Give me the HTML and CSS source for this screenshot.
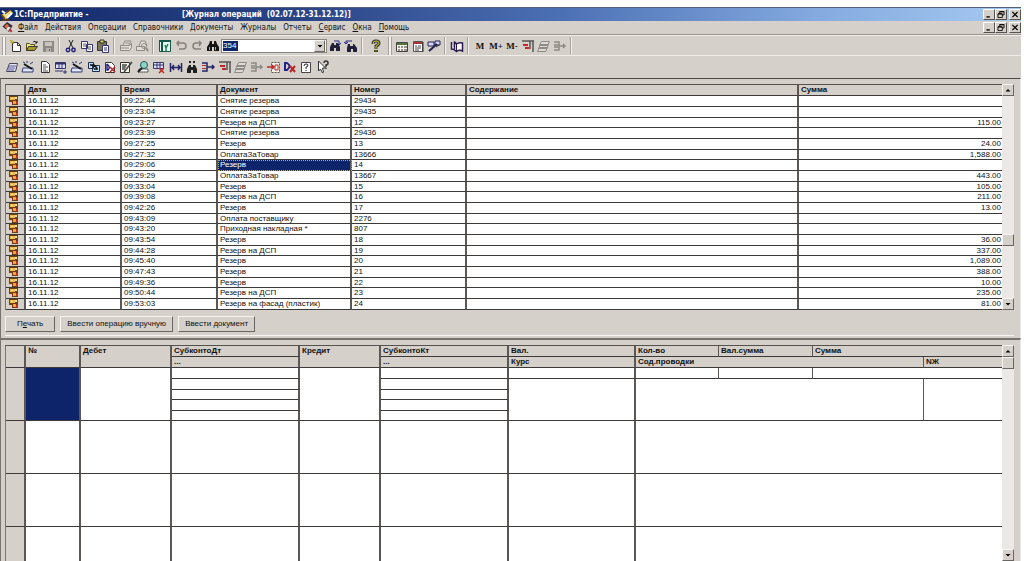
FILE: index.html
```html
<!DOCTYPE html>
<html lang="ru">
<head>
<meta charset="utf-8">
<title>1С:Предприятие - Журнал операций</title>
<link rel="stylesheet" href="styles.css">
</head>
<body>
<svg class="defs" aria-hidden="true">
  <symbol id="op" viewBox="0 0 10 9"><path d="M0 0h9v6H0z" fill="#6f4216"/><path d="M1 1h5v3H1z" fill="#efb848"/><path d="M2 2h2v1H2zM6 1h2v2H6z" fill="#fbe4a0"/><path d="M3 4h6v5H3z" fill="#7c3514"/><path d="M4 5h3v3H4z" fill="#eaa53c"/><path d="M7 6h2v2H7z" fill="#c8302a"/></symbol>
  <symbol id="new" viewBox="0 0 14 14"><path d="M3.5 3.5h5l3 3v6h-8z" fill="#fff" stroke="#333"/><path d="M8.500 3.500v3h3" fill="none" stroke="#333"/><path d="M1 3h4M3 1v4M1 1l4 4" stroke="#b5ad2a"/></symbol>
  <symbol id="open" viewBox="0 0 14 14"><path d="M1.500 11.500v-7h3l1 1h4v2" fill="#f5e98a" stroke="#55501a"/><path d="M1.500 11.500l2-4h9l-3 4z" fill="#a79a28" stroke="#333"/><path d="M8 3q2-2 4 1m0-2v2h-2" fill="none" stroke="#222"/></symbol>
  <symbol id="save" viewBox="0 0 14 14"><path d="M2 2h11v11H2z" fill="#8d8a85"/><path d="M4 3h7v4H4z" fill="#c9c6c0"/><path d="M5 9h5v4H5z" fill="#b5b2ac"/><path d="M8 10h1v2H8z" fill="#666"/></symbol>
  <symbol id="cut" viewBox="0 0 14 14"><path d="M5 1l4 8M9 1L5 9" stroke="#222"/><g fill="none" stroke="#26267c" stroke-width="1.500"><circle cx="4" cy="11" r="1.700"/><circle cx="9.500" cy="11" r="1.700"/></g></symbol>
  <symbol id="copy" viewBox="0 0 14 14"><path d="M1.500 2.500h6v7h-6zM6.500 5.500h6v7h-6z" fill="#fff" stroke="#34346c"/><path d="M3 5h3M3 7h3M8 8h3M8 10h3" stroke="#555"/></symbol>
  <symbol id="paste" viewBox="0 0 14 14"><path d="M1.500 2.500h9v9h-9z" fill="#77755c" stroke="#333"/><path d="M4 1h4v3H4z" fill="#d8d060" stroke="#333"/><path d="M6.500 6.500h6v7h-6z" fill="#fff" stroke="#34346c"/><path d="M8 9h3M8 11h3" stroke="#34346c"/></symbol>
  <symbol id="print" viewBox="0 0 14 14"><path d="M4 6l2-4h6l-2 4M1.500 6.500h9l2-2v4l-2 3h-9z" fill="#e4e1dc" stroke="#8d8a85"/><path d="M2 9h8M6 4h4" stroke="#8d8a85"/></symbol>
  <symbol id="preview" viewBox="0 0 14 14"><path d="M4 7l2-5h4l2 5M1.500 7.500h8v4h-8z" fill="#e4e1dc" stroke="#8d8a85"/><circle cx="9" cy="7" r="2.500" fill="none" stroke="#8d8a85"/><path d="M11 9l2 3" stroke="#8d8a85" stroke-width="2"/></symbol>
  <symbol id="props" viewBox="0 0 14 14"><path d="M1.500 1.500h11v11h-11z" fill="#e8fff4" stroke="#145a48"/><path d="M1 2h12M4 2v11" stroke="#145a48" stroke-width="2"/><path d="M7 6l1 3 2-4M8 9v3" fill="none" stroke="#228055" stroke-width="1.500"/></symbol>
  <symbol id="undo" viewBox="0 0 14 14"><path d="M3 4h6q3 0 3 3t-3 3H5M5 2L3 4l2 3" fill="none" stroke="#858280" stroke-width="1.500"/></symbol>
  <symbol id="redo" viewBox="0 0 14 14"><path d="M11 4H6Q3 4 3 7t3 3h5M9 2l2 2-2 3" fill="none" stroke="#858280" stroke-width="1.500"/></symbol>
  <symbol id="bino" viewBox="0 0 14 14"><path d="M4 2h2v3h2V2h2l1 3 2 3v4H8V8H6v4H1V8l2-3z" fill="#151515"/><path d="M3 8h1v3H3zM9 8h1v3H9z" fill="#aaa"/></symbol>
  <symbol id="findn" viewBox="0 0 14 14"><path d="M4 4h2v2h2V4h2l2 4v4H8V9H6v3H2V8z" fill="#202038"/><path d="M6 2h5m0 0v4M9 4l2 2 2-2" fill="none" stroke="#26267c"/></symbol>
  <symbol id="findp" viewBox="0 0 14 14"><path d="M4 5h2v2h3V5h1l3 4v4H9v-3H7v3H3V9z" fill="#202038"/><path d="M2 5V2h6M0 3l2 2 2-2" fill="none" stroke="#26267c"/></symbol>
  <symbol id="findno" viewBox="0 0 14 14"><path d="M4 5h2v2h2V5h2l2 4v4H8v-3H6v3H2V9z" fill="#202020"/><path d="M4 2h2M8 2h2" stroke="#202020" stroke-width="2"/></symbol>
  <symbol id="help" viewBox="0 0 14 14"><path d="M4 5q0-3 3-3t3 2q0 2-3 3v3" fill="none" stroke="#333" stroke-width="3"/><path d="M4 5q0-3 3-3t3 2q0 2-3 3v3" fill="none" stroke="#d2cf38"/><path d="M5 11h4v2H5z" fill="#55531c"/></symbol>
  <symbol id="calc" viewBox="0 0 14 14"><path d="M1.500 3.500h11v9h-11z" fill="#f6f4ea" stroke="#444"/><path d="M2 5h10" stroke="#55753c" stroke-width="2"/><path d="M3 8h2M6 8h2M9 8h3M3 11h2M6 11h2M9 11h3" stroke="#333"/></symbol>
  <symbol id="cal" viewBox="0 0 14 14"><path d="M2.500 2.500h9v10h-9z" fill="#fff" stroke="#555"/><path d="M3 4h8" stroke="#a33" stroke-width="2"/><path d="M4 7h2M7 7h3M4 9h6M4 11h4" stroke="#444"/><path d="M12 3v10" stroke="#333"/></symbol>
  <symbol id="tool" viewBox="0 0 14 14"><path d="M1 3h6v4H1zM8 2h5v4H8z" fill="#d8d8ff" stroke="#222250"/><path d="M2 12l8-7" stroke="#222250" stroke-width="2"/><path d="M9 8l3-2" stroke="#222"/></symbol>
  <symbol id="book" viewBox="0 0 14 14"><path d="M1.500 3v7q3 0 5 2.500 3-2 6-.5V4q-4-1-6 1Q5 3 4.500 3v7" fill="#fff" stroke="#28184c" stroke-width="1.500"/><path d="M6.500 5v7" stroke="#28184c"/></symbol>
  <symbol id="tree" viewBox="0 0 14 14"><path d="M1 2h12M12 2v11M9 2v8" stroke="#555" stroke-width="1.500"/><path d="M2 5h5v2H2zM4 8h4v2H4z" fill="#c22727"/></symbol>
  <symbol id="stack" viewBox="0 0 14 14"><path d="M4.500 2.500h8l-2 4h-8zM3.500 5.500h8l-2 4h-8zM2.500 8.500h8l-2 4h-8z" fill="#dedbd5" stroke="#8d8a85"/></symbol>
  <symbol id="merge" viewBox="0 0 14 14"><path d="M1 3h5v3H1m0 2h5v3H1M6 7h6M10 5l2 2-2 2" fill="none" stroke="#8d8a85" stroke-width="1.500"/></symbol>
  <symbol id="card" viewBox="0 0 14 14"><path d="M4.500 3.500h8l-2 8h-9z" fill="#e8e8f4" stroke="#44445a"/><path d="M4 6h7M3 8h7M3 10h6" stroke="#56569a"/></symbol>
  <symbol id="wand" viewBox="0 0 14 14"><path d="M2 8h10v4H1z" fill="#dfe6fa" stroke="#333a70"/><path d="M3 4l8 5" stroke="#151520" stroke-width="2"/><path d="M9 4l3-2M2 2l2 1M6 1v2" stroke="#333a70"/></symbol>
  <symbol id="doc" viewBox="0 0 14 14"><path d="M3.500 1.500h5l3 3v8h-8z" fill="#fff" stroke="#333"/><path d="M5 5h3M5 7h5M5 9h3M5 11h5" stroke="#555"/></symbol>
  <symbol id="list" viewBox="0 0 14 14"><path d="M1.500 2.500h10v6h-10z" fill="#dfe0ff" stroke="#34346c"/><path d="M2 3.500h9" stroke="#34346c" stroke-width="2"/><path d="M5 3v6M8 3v5M1 11h8M9 12h4m-2-2v4" stroke="#34346c"/></symbol>
  <symbol id="docs" viewBox="0 0 14 14"><path d="M1.500 2.500h5v6h-5zM5.500 5.500h7v6h-7z" fill="#bce2f0" stroke="#222a55"/><path d="M3 5h4l3 3M7 9h4" stroke="#111" stroke-width="1.500"/></symbol>
  <symbol id="dx" viewBox="0 0 14 14"><path d="M2.500 2.500h6l3 3v7h-9z" fill="#fff" stroke="#333"/><path d="M4 4v6h1q3-3-1-6" fill="none" stroke="#222288" stroke-width="1.500"/><path d="M7 7l5 5M12 7l-5 5" stroke="#b92828" stroke-width="1.500"/></symbol>
  <symbol id="dk" viewBox="0 0 14 14"><path d="M2 3v7h2q5-4 0-7z" fill="none" stroke="#222288" stroke-width="2"/><path d="M7 6l5 6M12 6l-5 6" stroke="#b92828" stroke-width="2"/></symbol>
  <symbol id="edit" viewBox="0 0 14 14"><path d="M1.500 2.500h9v10h-9z" fill="#f4f6e8" stroke="#333"/><path d="M3 5h5M3 7h4M3 9h3M5 12l8-10" stroke="#444" stroke-width="1.500"/></symbol>
  <symbol id="lens" viewBox="0 0 14 14"><path d="M3 9h9v3H2z" fill="#fff" stroke="#555"/><circle cx="8" cy="5" r="3.500" fill="#8ed4c6" stroke="#205a56"/><path d="M6 8l-4 4" stroke="#222" stroke-width="2"/></symbol>
  <symbol id="listx" viewBox="0 0 14 14"><path d="M1.500 2.500h10v6h-10z" fill="#dfe0ff" stroke="#34346c"/><path d="M2 5h9M5 3v6M8 3v5" stroke="#34346c"/><path d="M7 8l5 5M12 8l-5 5" stroke="#c02828" stroke-width="1.500"/></symbol>
  <symbol id="span" viewBox="0 0 14 14"><path d="M1.500 3v9M12.500 3v9M3 7.500h8M5 5L3 7.500 5 10M9 5l2 2.500L9 10" fill="none" stroke="#22226a" stroke-width="1.500"/></symbol>
  <symbol id="merge2" viewBox="0 0 14 14"><path d="M1 3h5v8H1M6 7h7M11 5l2 2-2 2" fill="none" stroke="#22226a" stroke-width="1.500"/><path d="M1 5h4v1H1zM1 8h4v1H1z" fill="#b43030"/></symbol>
  <symbol id="target" viewBox="0 0 14 14"><path d="M4.500 2.500h8v10h-8z" fill="#f4f0ea" stroke="#555" stroke-dasharray="2 1"/><path d="M0 7h7M5 5l2 2-2 2" fill="none" stroke="#b43030" stroke-width="1.500"/><path d="M8 5h3v5H8z" fill="none" stroke="#b43030"/></symbol>
  <symbol id="boxq" viewBox="0 0 14 14"><path d="M2.500 2.500h9v10h-9z" fill="#fff" stroke="#444"/><path d="M5 6q0-2 2-2t2 1q0 2-2 2v2m0 1v1" fill="none" stroke="#222"/></symbol>
  <symbol id="arrowq" viewBox="0 0 14 14"><path d="M2.500 1v10l2-2 2 4 1-1-1-4h3z" fill="#fff" stroke="#333"/><path d="M8 3q0-2 2-2t2 2-2 2v2m0 1v1" fill="none" stroke="#333" stroke-width="1.500"/></symbol>
  <symbol id="min" viewBox="0 0 8 8"><path d="M1 6h4v1.500H1z"/></symbol>
  <symbol id="max" viewBox="0 0 8 8"><path d="M2.500 2.500v-2h5v4h-2M.5 3.500h5v4h-5zM.5 3h5M2.500 1h5" fill="none" stroke="#000"/></symbol>
  <symbol id="close" viewBox="0 0 8 8"><path d="M1 1l6 6M7 1L1 7" stroke="#000" stroke-width="1.500"/></symbol>
  <symbol id="up" viewBox="0 0 8 8"><path d="M1.500 5.500h5L4 3z"/></symbol>
  <symbol id="down" viewBox="0 0 8 8"><path d="M1.500 3h5L4 5.500z"/></symbol>
</svg>

<div class="window">
  <header class="titlebar">
    <svg class="app-icon" viewBox="0 0 14 12"><path d="M1 6l9-5 3 3-8 7z" fill="#f0d560"/><path d="M2 2l4 3M7 9l5-5M5 6l3-3" stroke="#fff" stroke-width="2"/><path d="M1 5l4 5M5 5l5-4M2 11h8" stroke="#6b3a16" stroke-width="1.500"/></svg>
    <span class="app-name">1С:Предприятие -</span>
    <h1>[Журнал операций&nbsp; (02.07.12-31.12.12)]</h1>
    <div class="winbtns">
      <button aria-label="Свернуть"><svg><use href="#min"/></svg></button><button aria-label="Восстановить"><svg><use href="#max"/></svg></button><button class="x" aria-label="Закрыть"><svg><use href="#close"/></svg></button>
    </div>
  </header>
  <nav class="menubar">
    <svg class="menu-icon" viewBox="0 0 12 12"><path d="M0 5l5-5 6 4-4 7z" fill="#322c44"/><path d="M2 5l3-3 2 2-3 3z" fill="#e46a3a"/><path d="M6 5l3 1-3 4-2-2z" fill="#ece4d8"/><path d="M8 8l2 3" stroke="#c02828" stroke-width="2"/></svg>
    <button><u>Ф</u>айл</button><button><u>Д</u>ействия</button><button>Опе<u>р</u>ации</button><button>Справочники</button><button>Документы</button><button>Журналы</button><button>Отчеты</button><button><u>С</u>ервис</button><button><u>О</u>кна</button><button><u>П</u>омощь</button>
    <div class="winbtns">
      <button aria-label="Свернуть окно"><svg><use href="#min"/></svg></button><button aria-label="Восстановить окно"><svg><use href="#max"/></svg></button><button class="x" aria-label="Закрыть окно"><svg><use href="#close"/></svg></button>
    </div>
  </nav>

  <div class="toolbar" role="toolbar" aria-label="Стандартная">
    <i class="grip"></i>
    <button aria-label="Новый"><svg><use href="#new"/></svg></button><button aria-label="Открыть"><svg><use href="#open"/></svg></button><button aria-label="Сохранить"><svg><use href="#save"/></svg></button>
    <i class="sep"></i>
    <button aria-label="Вырезать"><svg><use href="#cut"/></svg></button><button aria-label="Копировать"><svg><use href="#copy"/></svg></button><button aria-label="Вставить"><svg><use href="#paste"/></svg></button>
    <i class="sep"></i>
    <button aria-label="Печать"><svg><use href="#print"/></svg></button><button aria-label="Просмотр"><svg><use href="#preview"/></svg></button>
    <i class="sep"></i>
    <button aria-label="Свойства"><svg><use href="#props"/></svg></button><button aria-label="Отменить"><svg><use href="#undo"/></svg></button><button aria-label="Повторить"><svg><use href="#redo"/></svg></button><button aria-label="Найти"><svg><use href="#bino"/></svg></button>
    <div class="combo"><input type="text" value="354" aria-label="Строка поиска"><button class="bevel" aria-label="Список"><svg><use href="#down"/></svg></button></div>
    <button aria-label="Найти далее"><svg><use href="#findn"/></svg></button><button aria-label="Найти назад"><svg><use href="#findp"/></svg></button>
    <i class="sep"></i>
    <button class="wide" aria-label="Справка"><svg><use href="#help"/></svg></button>
    <i class="grip"></i>
    <button aria-label="Калькулятор"><svg><use href="#calc"/></svg></button><button aria-label="Календарь"><svg><use href="#cal"/></svg></button><button aria-label="Табло"><svg><use href="#tool"/></svg></button>
    <i class="sep"></i>
    <button aria-label="Описание"><svg><use href="#book"/></svg></button>
    <i class="sep"></i>
    <button class="mem">M</button><button class="mem">M+</button><button class="mem">M-</button><button aria-label="План счетов"><svg><use href="#tree"/></svg></button><button aria-label="Проводки"><svg><use href="#stack"/></svg></button><button aria-label="Операции"><svg><use href="#merge"/></svg></button>
    <i class="sep end"></i>
  </div>
  <div class="toolbar journal" role="toolbar" aria-label="Журнал">
    <div class="icons">
      <button aria-label="Ввести"><svg><use href="#card"/></svg></button><button aria-label="Мастер"><svg><use href="#wand"/></svg></button><button aria-label="Документ"><svg><use href="#doc"/></svg></button><button aria-label="Новая строка"><svg><use href="#list"/></svg></button><button aria-label="Типовая операция"><svg><use href="#wand"/></svg></button><button aria-label="Копировать строку"><svg><use href="#docs"/></svg></button><button aria-label="Удалить"><svg><use href="#dx"/></svg></button><button aria-label="Изменить"><svg><use href="#edit"/></svg></button><button aria-label="Просмотреть"><svg><use href="#lens"/></svg></button><button aria-label="Удалить строку"><svg><use href="#listx"/></svg></button><button aria-label="Интервал"><svg><use href="#span"/></svg></button><button aria-label="Поиск по номеру"><svg><use href="#findno"/></svg></button><button aria-label="Проводки"><svg><use href="#merge2"/></svg></button><button aria-label="Структура"><svg><use href="#tree"/></svg></button><button aria-label="Отбор"><svg><use href="#stack"/></svg></button><button aria-label="Объединить"><svg><use href="#merge"/></svg></button><button aria-label="Включить проводки"><svg><use href="#target"/></svg></button><button aria-label="Выключить проводки"><svg><use href="#dk"/></svg></button><button aria-label="Описание журнала"><svg><use href="#boxq"/></svg></button><button aria-label="Что это"><svg><use href="#arrowq"/></svg></button>
    </div>
  </div>

  <main class="pane">
    <div class="grid">
      <table class="ops">
        <colgroup><col class="c-mark"><col class="c-date"><col class="c-time"><col class="c-doc"><col class="c-num"><col><col class="c-sum"></colgroup>
        <thead><tr><th></th><th>Дата</th><th>Время</th><th>Документ</th><th>Номер</th><th>Содержание</th><th class="edge">Сумма</th></tr></thead>
        <tbody>
          <tr><td><svg><use href="#op"/></svg></td><td>16.11.12</td><td>09:22:44</td><td>Снятие резерва</td><td>29434</td><td></td><td class="edge"></td></tr>
          <tr><td><svg><use href="#op"/></svg></td><td>16.11.12</td><td>09:23:04</td><td>Снятие резерва</td><td>29435</td><td></td><td class="edge"></td></tr>
          <tr><td><svg><use href="#op"/></svg></td><td>16.11.12</td><td>09:23:27</td><td>Резерв на ДСП</td><td>12</td><td></td><td class="edge">115.00</td></tr>
          <tr><td><svg><use href="#op"/></svg></td><td>16.11.12</td><td>09:23:39</td><td>Снятие резерва</td><td>29436</td><td></td><td class="edge"></td></tr>
          <tr><td><svg><use href="#op"/></svg></td><td>16.11.12</td><td>09:27:25</td><td>Резерв</td><td>13</td><td></td><td class="edge">24.00</td></tr>
          <tr><td><svg><use href="#op"/></svg></td><td>16.11.12</td><td>09:27:32</td><td>ОплатаЗаТовар</td><td>13666</td><td></td><td class="edge">1,588.00</td></tr>
          <tr><td><svg><use href="#op"/></svg></td><td>16.11.12</td><td>09:29:06</td><td class="selected">Резерв</td><td>14</td><td></td><td class="edge"></td></tr>
          <tr><td><svg><use href="#op"/></svg></td><td>16.11.12</td><td>09:29:29</td><td>ОплатаЗаТовар</td><td>13667</td><td></td><td class="edge">443.00</td></tr>
          <tr><td><svg><use href="#op"/></svg></td><td>16.11.12</td><td>09:33:04</td><td>Резерв</td><td>15</td><td></td><td class="edge">105.00</td></tr>
          <tr><td><svg><use href="#op"/></svg></td><td>16.11.12</td><td>09:39:08</td><td>Резерв на ДСП</td><td>16</td><td></td><td class="edge">211.00</td></tr>
          <tr><td><svg><use href="#op"/></svg></td><td>16.11.12</td><td>09:42:26</td><td>Резерв</td><td>17</td><td></td><td class="edge">13.00</td></tr>
          <tr><td><svg><use href="#op"/></svg></td><td>16.11.12</td><td>09:43:09</td><td>Оплата поставщику</td><td>2276</td><td></td><td class="edge"></td></tr>
          <tr><td><svg><use href="#op"/></svg></td><td>16.11.12</td><td>09:43:20</td><td>Приходная накладная *</td><td>807</td><td></td><td class="edge"></td></tr>
          <tr><td><svg><use href="#op"/></svg></td><td>16.11.12</td><td>09:43:54</td><td>Резерв</td><td>18</td><td></td><td class="edge">36.00</td></tr>
          <tr><td><svg><use href="#op"/></svg></td><td>16.11.12</td><td>09:44:28</td><td>Резерв на ДСП</td><td>19</td><td></td><td class="edge">337.00</td></tr>
          <tr><td><svg><use href="#op"/></svg></td><td>16.11.12</td><td>09:45:40</td><td>Резерв</td><td>20</td><td></td><td class="edge">1,089.00</td></tr>
          <tr><td><svg><use href="#op"/></svg></td><td>16.11.12</td><td>09:47:43</td><td>Резерв</td><td>21</td><td></td><td class="edge">388.00</td></tr>
          <tr><td><svg><use href="#op"/></svg></td><td>16.11.12</td><td>09:49:36</td><td>Резерв</td><td>22</td><td></td><td class="edge">10.00</td></tr>
          <tr><td><svg><use href="#op"/></svg></td><td>16.11.12</td><td>09:50:44</td><td>Резерв на ДСП</td><td>23</td><td></td><td class="edge">235.00</td></tr>
          <tr><td><svg><use href="#op"/></svg></td><td>16.11.12</td><td>09:53:03</td><td>Резерв на фасад (пластик)</td><td>24</td><td></td><td class="edge">81.00</td></tr>
        </tbody>
      </table>
      <div class="scroll"><button class="bevel" aria-label="Вверх"><svg><use href="#up"/></svg></button><i class="before"></i><i class="bevel thumb"></i><i class="after"></i><button class="bevel" aria-label="Вниз"><svg><use href="#down"/></svg></button></div>
    </div>
    <div class="actions"><button class="bevel">П<u>е</u>чать</button><button class="bevel">Ввести операцию вручную</button><button class="bevel">Ввести документ</button></div>
  </main>

  <section class="pane lower" aria-label="Проводки">
    <div class="grid">
      <div class="clip">
      <table class="entries">
        <colgroup><col class="c-mark"><col class="e-no"><col class="e-deb"><col class="e-sub"><col class="e-cred"><col class="e-sub"><col class="e-cur"><col class="e-qty"><col class="e-val"><col><col class="e-nj"></colgroup>
        <thead>
          <tr><th rowspan="2"></th><th rowspan="2">№</th><th rowspan="2">Дебет</th><th>СубконтоДт</th><th rowspan="2">Кредит</th><th>СубконтоКт</th><th>Вал.</th><th class="thin">Кол-во</th><th class="thin">Вал.сумма</th><th class="edge" colspan="2">Сумма</th></tr>
          <tr><th>...</th><th>...</th><th>Курс</th><th class="thin" colspan="3">Сод.проводки</th><th class="edge">NЖ</th></tr>
        </thead>
        <tbody class="record">
          <tr><td rowspan="5"></td><td rowspan="5" class="selected"></td><td rowspan="5"></td><td></td><td rowspan="5"></td><td></td><td></td><td class="thin"></td><td class="thin"></td><td class="edge" colspan="2"></td></tr>
          <tr><td></td><td></td><td rowspan="4"></td><td class="thin" colspan="3" rowspan="4"></td><td class="edge" rowspan="4"></td></tr>
          <tr><td></td><td></td></tr>
          <tr><td></td><td></td></tr>
          <tr><td></td><td></td></tr>
        </tbody>
        <tbody class="blank">
          <tr><td></td><td></td><td></td><td></td><td></td><td></td><td></td><td class="edge" colspan="4"></td></tr>
          <tr><td></td><td></td><td></td><td></td><td></td><td></td><td></td><td class="edge" colspan="4"></td></tr>
          <tr><td></td><td></td><td></td><td></td><td></td><td></td><td></td><td class="edge" colspan="4"></td></tr>
        </tbody>
      </table>
      </div>
      <div class="scroll"><button class="bevel" aria-label="Вверх"><svg><use href="#up"/></svg></button><i class="bevel thumb"></i><i class="after"></i><button class="bevel" aria-label="Вниз"><svg><use href="#down"/></svg></button></div>
    </div>
  </section>
</div>
</body>
</html>
```
FILE: styles.css
```css
* { box-sizing: border-box; }
html, body { height: 100%; }
body {
  margin: 0;
  padding: 7px 3px 0 0;
  overflow: hidden;
  background: #fff;
  color: #111;
  font-family: "Liberation Sans", sans-serif;
  font-size: 8px;
}
.defs { position: absolute; width: 0; height: 0; }
button, input { margin: 0; padding: 0; border: 0; background: none; color: inherit; font: inherit; }
svg { display: block; }
i { display: block; }

.window { display: flex; flex-direction: column; height: 100%; background: #d5d0c9; }

.titlebar {
  display: flex;
  align-items: center;
  height: 14px;
  border-top: 1px solid #55607c;
  background: linear-gradient(90deg, #12296b 0%, #2a4587 30%, #4c70b4 55%, #84aae0 80%, #a6caf0 100%);
  color: #fff;
  font: bold 8px/12px "DejaVu Sans Condensed", "DejaVu Sans", sans-serif;
}
.app-icon { width: 14px; height: 12px; }
.app-name { width: 168px; white-space: nowrap; }
.titlebar h1 { margin: 0; font: inherit; white-space: nowrap; }
.winbtns { display: flex; margin-left: auto; }
.winbtns button {
  width: 12px;
  height: 11px;
  padding: 1px;
  border: 1px solid #56524e;
  border-top-color: #fff;
  border-left-color: #fff;
  background: #d5d0c9;
}
.winbtns .x { margin-left: 2px; }
.winbtns svg { width: 8px; height: 7px; }

.menubar {
  display: flex;
  align-items: center;
  height: 14px;
  border-bottom: 1px solid #98948f;
  font: 8px/12px "DejaVu Sans Condensed", "DejaVu Sans", sans-serif;
}
.menu-icon { width: 12px; height: 11px; margin: 0 1px 0 2px; }
.menubar > button { padding: 0 4px 0 3px; white-space: nowrap; }

.toolbar {
  display: flex;
  align-items: center;
  height: 21px;
  border-top: 1px solid #f1eeea;
  border-bottom: 1px solid #f1eeea;
}
.toolbar svg { width: 14px; height: 14px; margin: 0 auto; }
.toolbar button { width: 16px; height: 16px; }
.toolbar .wide { width: 20px; }
.toolbar .mem { font: bold 9px/16px "Liberation Serif", serif; }
.grip {
  width: 4px;
  height: 18px;
  margin: 0 2px 0 2px;
  border: 1px solid #a5a19b;
  border-top: 0;
  border-bottom: 0;
  background: #f4f2ef;
}
.sep { width: 2px; height: 17px; margin: 0 3px 0 2px; border-left: 1px solid #a5a19b; border-right: 1px solid #f4f2ef; }
.combo { display: flex; align-items: center; width: 106px; height: 14px; padding: 1px; border: 1px solid #8a8680; background: #fff; }
.combo input { width: 15px; height: 10px; background: #0d246a; color: #fff; }
.toolbar .combo .bevel { width: 11px; height: 12px; margin-left: auto; }
.toolbar .combo svg { width: 8px; height: 8px; }
.journal { border-top: 0; border-bottom: 0; height: 22px; padding-left: 4px; }
.icons { display: grid; grid-template-columns: repeat(20, 1fr); width: 327px; }

.bevel {
  border: 1px solid #6a6661;
  border-top-color: #f7f5f2;
  border-left-color: #f7f5f2;
  background: #d5d0c9;
}

.pane {
  padding: 5px 6px 2px 4px;
  border-top: 1px solid #4b4845;
  border-left: 1px solid #77736e;
  border-right: 1px solid #eceae6;
}
.lower { flex: 1; display: flex; min-height: 0; padding-bottom: 0; border-top: 2px solid #77736e; }
.grid { display: flex; flex: 1; min-width: 0; }
.clip { flex: 1; min-width: 0; overflow: hidden; }

table { width: 100%; table-layout: fixed; border-collapse: separate; border-spacing: 0; border-top: 1px solid #55514d; border-left: 1px solid #77736e; }
th, td {
  height: 11px;
  padding: 0 2px;
  border-bottom: 1px solid #3c3a38;
  border-right: 2px solid #5a5754;
  background: #fff;
  line-height: 9px;
  text-align: left;
  vertical-align: top;
  white-space: nowrap;
  overflow: hidden;
}
th { background: #d5d0c9; font-weight: bold; line-height: 10px; }
th.edge, td.edge { border-right: 0; }
td:first-child[rowspan="5"], .ops td:first-child, .blank td:first-child { background: #d5d0c9; }
td.selected { background: #0d246a; color: #fff; }

.ops tbody tr:nth-child(3n) td { height: 10px; }
.ops td.edge { padding-right: 1px; text-align: right; }
.ops .selected { outline: 1px dotted #b8b060; outline-offset: -1px; }
.ops td svg { width: 10px; height: 9px; margin-left: 1px; }
.c-mark { width: 20px; }
.c-date, .c-time { width: 96px; }
.c-doc { width: 134px; }
.c-num { width: 115px; }
.c-sum { width: 203px; }

.e-no { width: 55px; }
.e-deb { width: 91px; }
.e-sub { width: 128px; }
.e-cred { width: 81px; }
.e-cur { width: 127px; }
.e-qty { width: 83px; }
.e-val { width: 94px; }
.e-nj { width: 78px; }
.entries .thin { border-right-width: 1px; }
.record td { padding: 0; }
.record tr:nth-child(3) td, .record tr:nth-child(5) td { height: 10px; }
.blank td { height: 53px; }

.scroll { display: flex; flex-direction: column; width: 12px; background: #ebe8e5; }
.scroll .bevel { flex: none; width: 12px; height: 12px; padding: 1px; }
.scroll svg { width: 8px; height: 8px; }
.before { flex: 8; }
.after { flex: 3; }

.actions { display: flex; gap: 5px; padding: 6px 0 3px; border-bottom: 1px solid #f7f5f2; }
.actions button { height: 16px; padding: 0 6px; line-height: 14px; white-space: nowrap; }
.actions button:first-child { padding: 0 11px; }
```
